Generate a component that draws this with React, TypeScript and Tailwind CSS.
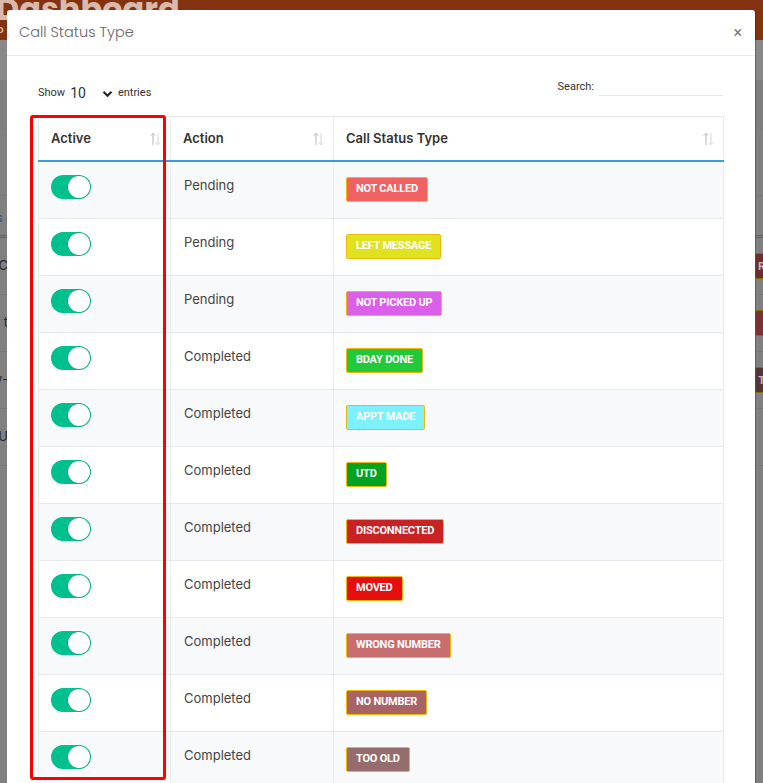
import React from 'react';

type Row = { action: string; label: string; badge: string };

const rows: Row[] = [
  { action: 'Pending', label: 'NOT CALLED', badge: 'bg-[#f06262]' },
  { action: 'Pending', label: 'LEFT MESSAGE', badge: 'bg-[#e0e220]' },
  { action: 'Pending', label: 'NOT PICKED UP', badge: 'bg-[#da5fe9]' },
  { action: 'Completed', label: 'BDAY DONE', badge: 'bg-[#22c93b]' },
  { action: 'Completed', label: 'APPT MADE', badge: 'bg-[#7cf0fb]' },
  { action: 'Completed', label: 'UTD', badge: 'bg-[#00a322]' },
  { action: 'Completed', label: 'DISCONNECTED', badge: 'bg-[#c82222]' },
  { action: 'Completed', label: 'MOVED', badge: 'bg-[#e60f0f]' },
  { action: 'Completed', label: 'WRONG NUMBER', badge: 'bg-[#c86e6e]' },
  { action: 'Completed', label: 'NO NUMBER', badge: 'bg-[#a86464]' },
  { action: 'Completed', label: 'TOO OLD', badge: 'bg-[#956d6d]' },
];

function SortIcon() {
  return (
    <svg width="11" height="14" viewBox="0 0 11 14" fill="none" strokeWidth="1">
      <g stroke="#b5b5b5">
        <path d="M3 13V1.5M0.8 3.7L3 1.3l2.2 2.4" />
      </g>
      <g stroke="#d6d6d6">
        <path d="M8 1v11.5M5.8 10.3L8 12.7l2.2-2.4" />
      </g>
    </svg>
  );
}

function Toggle() {
  return (
    <div className="flex h-[24px] w-[40px] items-center justify-end rounded-full bg-[#00c08d] p-[1px]">
      <div className="h-[22px] w-[22px] rounded-full bg-white shadow-[0_0_0_0.5px_rgba(0,120,90,0.4)]" />
    </div>
  );
}

// background page behind the backdrop, seen only at the edges
function BackPage() {
  const bgRows = [
    { left: 'C', right: 'R', rbg: 'bg-[#6c2d2d]' },
    { left: 't', right: '', rbg: 'bg-[#793131]' },
    { left: 'w-', right: 'TC', rbg: 'bg-[#553636]' },
    { left: 'U', right: '', rbg: '' },
  ];
  return (
    <div className="flex h-full w-full flex-col bg-[#808080]">
      <div className="h-[40px] shrink-0 overflow-hidden bg-[#833210] text-[#d8b9ab]">
        <div className="-mt-[9px] ml-[-4px] text-[32px] font-bold leading-[36px]" style={{ fontFamily: 'Poppins, Inter, sans-serif' }}>
          Dashboard
        </div>
        <div className="ml-[-6px] mt-[-4px] text-[11px] font-semibold leading-[12px]">lo</div>
      </div>
      <div className="h-[40px] shrink-0 bg-[#898989]" />
      <div className="h-[50px] shrink-0 bg-[#7e7e7e]" />
      <div className="h-[66px] shrink-0 border-b border-[#767676]" />
      <div className="flex h-[42px] shrink-0 items-center border-b-[3px] border-double border-[#2f6f9f] pt-[4px] text-[12px] text-[#1f4f7f]">
        <span className="ml-[-4px]">s -</span>
      </div>
      {bgRows.map((r, i) => (
        <div key={i} className="flex h-[57px] shrink-0 items-center justify-between border-b border-[#777777]">
          <div className="flex w-[8px] justify-end overflow-hidden whitespace-nowrap text-[13px] text-[#2a2a2a]" style={{ fontFamily: 'Inter, sans-serif' }}>
            {r.left}
          </div>
          {r.rbg ? (
            <div className={`mr-[-20px] flex h-[26px] w-[28px] items-center rounded-[2px] border border-[#8a6a10] pl-[2px] text-[11px] font-bold text-[#c9b9b9] ${r.rbg}`}>
              {r.right}
            </div>
          ) : null}
        </div>
      ))}
    </div>
  );
}

export default function App() {
  return (
    <div className="relative h-[783px] w-[763px] overflow-hidden" style={{ fontFamily: 'Inter, Roboto, sans-serif' }}>
      <BackPage />

      <div className="absolute left-[7px] top-[10px] h-[800px] w-[748px] rounded-t-[3px] bg-white shadow-[1px_0_0_rgba(0,0,0,0.25)]">
        <div className="flex h-[46px] items-center justify-between border-b border-[#e9ecef] pl-[12px] pr-[13px]">
          <h5 className="text-[14.5px] font-light text-[#666]" style={{ fontFamily: 'Poppins, Inter, sans-serif' }}>
            Call Status Type
          </h5>
          <span className="text-[16px] leading-none text-[#777]" style={{ fontFamily: 'Roboto, sans-serif' }}>×</span>
        </div>

        <div className="px-[31px] pt-[22px]">
          <div className="flex h-[38px] justify-between text-[11px] text-[#333]" style={{ fontFamily: 'Roboto, sans-serif' }}>
            <div className="flex h-[24px] items-end pb-[1px]">
              <span>Show</span>
              <span className="ml-[5px] text-[14px] leading-[16px] text-[#333]">10</span>
              <svg className="mb-[3px] ml-[16px]" width="11" height="8" viewBox="0 0 11 8" fill="none">
                <path d="M1.5 1.8l4 4 4-4" stroke="#222" strokeWidth="2" />
              </svg>
              <span className="ml-[5px]">entries</span>
            </div>
            <div className="flex items-start pr-[1px] pt-[1px]">
              <span className="leading-[16px]">Search:</span>
              <div className="ml-[5px] h-[17px] w-[124px] border-b border-[#e6e6e6]" />
            </div>
          </div>

          <div className="w-[686px] border-t border-[#e3e6ea]">
            <div className="grid h-[45px] grid-cols-[133px_163px_1fr] border-b-2 border-[#3d9be0] text-[13px] font-semibold text-[#333]">
              {['Active', 'Action', 'Call Status Type'].map((h, i) => (
                <div key={h} className={`flex items-center justify-between pl-[12px] pr-[9px] ${i === 0 ? 'border-l border-[#e9ecef]' : ''} border-r border-[#e9ecef]`}>
                  <span>{h}</span>
                  <SortIcon />
                </div>
              ))}
            </div>
            {rows.map((r, i) => (
              <div
                key={r.label}
                className={`grid h-[57px] grid-cols-[133px_163px_1fr] border-b border-[#e6e9ed] ${i % 2 === 0 ? 'bg-[#f8f9fa]' : 'bg-white'}`}
              >
                <div className="border-l border-r border-[#e9ecef] pl-[12px] pt-[13px]">
                  <Toggle />
                </div>
                <div className="border-r border-[#e9ecef] pl-[13px] pt-[15px] text-[13px] leading-[16px] text-[#444]">{r.action}</div>
                <div className="border-r border-[#e9ecef] pl-[12px] pt-[12px]">
                  <span
                    className={`inline-flex h-[25px] items-center rounded-[2px] border border-[#f2b705] px-[9px] text-[11px] font-bold tracking-[-0.02em] text-white ${r.badge}`}
                    style={{ fontFamily: 'Roboto, sans-serif' }}
                  >
                    {r.label}
                  </span>
                </div>
              </div>
            ))}
          </div>
        </div>
      </div>

      <div className="absolute left-[30px] top-[115px] h-[665px] w-[136px] rounded-[3px] border-[3px] border-[#ff0000]" />
    </div>
  );
}
